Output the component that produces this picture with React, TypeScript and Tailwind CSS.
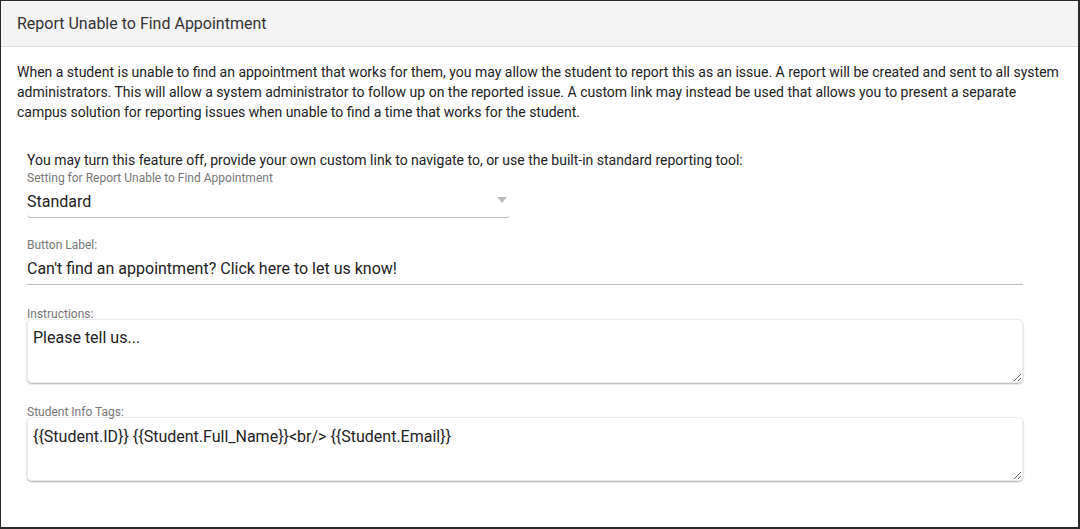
const App = () => {
  return (
    <div
      className="w-[1080px] h-[529px] bg-white border-l border-t border-r-2 border-b-2 border-[#2a2a2a] overflow-hidden text-[#222]"
      style={{ fontFamily: "Roboto, 'Liberation Sans', sans-serif" }}
    >
      <div className="h-[46px] bg-[#f4f4f4] border-b border-[#dcdcdc] px-4 flex items-center text-[16px] text-[#333]">
        Report Unable to Find Appointment
      </div>

      <div className="px-4 pt-[15px]">
        <p className="text-[14px] leading-[20px]">
          When a student is unable to find an appointment that works for them, you may allow the student to report this as
          an issue. A report will be created and sent to all system administrators. This will allow a system administrator
          to follow up on the reported issue. A custom link may instead be used that allows you to present a separate
          campus solution for reporting issues when unable to find a time that works for the student.
        </p>

        <div className="pl-[10px] pr-[39px] pt-[28px]">
          <div className="text-[14px] leading-[20px]">
            You may turn this feature off, provide your own custom link to navigate to, or use the built-in standard
            reporting tool:
          </div>
          <div className="pt-px text-[12px] leading-[14px] text-[#777]">Setting for Report Unable to Find Appointment</div>
          <div className="mt-[5px] w-[483px] h-[28px] border-b border-[#bbb] rounded-b-[4px] flex items-start justify-between pr-[3px]">
            <span className="text-[16px] leading-[24px]">Standard</span>
            <span className="mt-[7px] w-0 h-0 border-l-[5px] border-r-[5px] border-t-[6px] border-l-transparent border-r-transparent border-t-[#bdbdbd]" />
          </div>

          <div className="mt-[20px] text-[12px] leading-[14px] text-[#777]">Button Label:</div>
          <input
            readOnly
            defaultValue="Can't find an appointment? Click here to let us know!"
            className="mt-[2px] block w-full h-[31px] pb-[2px] border-b border-[#bbb] text-[16px] leading-[24px] outline-none bg-transparent"
          />

          <div className="mt-[22px] text-[12px] leading-[14px] text-[#777]">Instructions:</div>
          <textarea
            readOnly
            defaultValue="Please tell us..."
            className="-mt-[2px] block w-full h-[64px] rounded-[5px] border border-[#ececec] shadow-[0_1px_2px_rgba(0,0,0,0.35)] px-[5px] pt-[6px] pb-[2px] text-[16px] leading-[24px] outline-none resize-y"
          />

          <div className="mt-[22px] text-[12px] leading-[14px] text-[#777]">Student Info Tags:</div>
          <textarea
            readOnly
            defaultValue="{{Student.ID}} {{Student.Full_Name}}<br/> {{Student.Email}}"
            className="-mt-[2px] block w-full h-[64px] rounded-[5px] border border-[#ececec] shadow-[0_1px_2px_rgba(0,0,0,0.35)] px-[5px] pt-[7px] pb-[1px] text-[16px] leading-[24px] outline-none resize-y"
          />
        </div>
      </div>
    </div>
  );
};

export default App;
